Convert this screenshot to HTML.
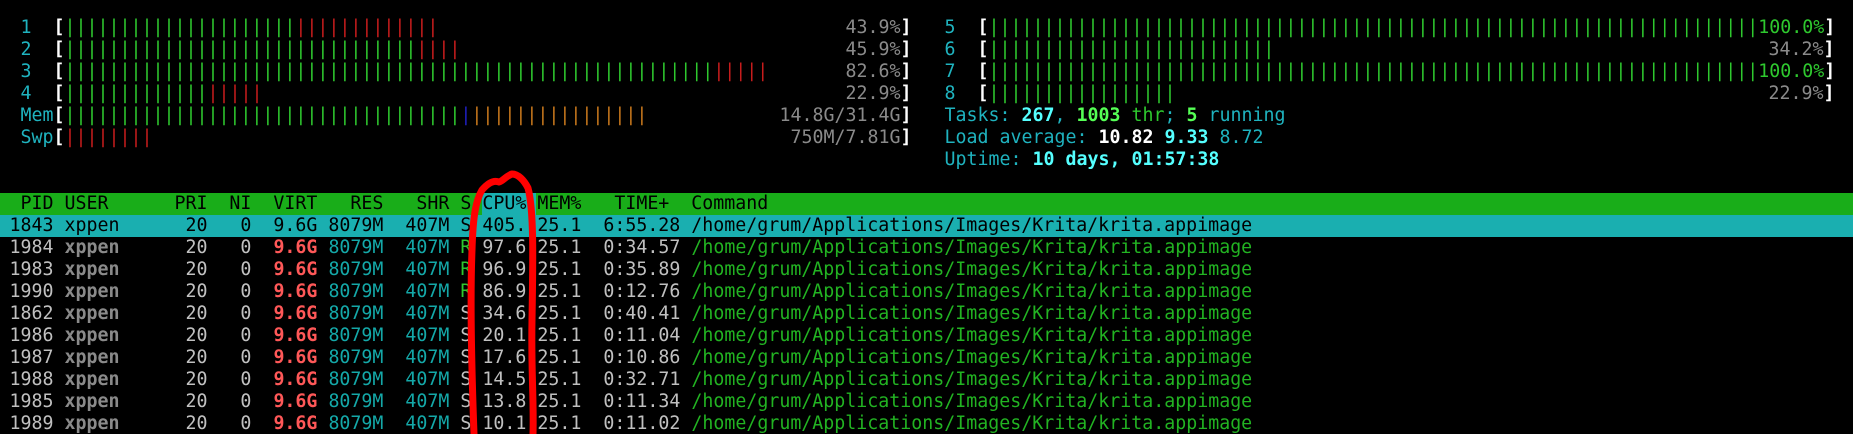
<!DOCTYPE html>
<html><head><meta charset="utf-8"><style>
html,body{margin:0;padding:0;background:#000;width:1853px;height:434px;overflow:hidden;position:relative}
*{font-family:"DejaVu Sans Mono","Liberation Mono",monospace;font-size:18.27px;}
.l{position:absolute;height:22px;line-height:22px;white-space:pre;color:#c0c0c0}
.c{color:#1fb3bf}.w{color:#fff;font-weight:bold}.g{color:#2ec82e}.r{color:#c61c1c}.o{color:#c8781c}.b{color:#2020c0}.p{color:#8a8a8a}
.bc{color:#55ffff;font-weight:bold}.bg{color:#55ff55;font-weight:bold}
.row{position:absolute;left:0;width:1853px;height:22px;line-height:22px;white-space:pre;color:#c0c0c0}
.row span.u{color:#8a8a8a;font-weight:bold}.row .v{color:#ff5858;font-weight:bold}.row .t{color:#14a8a8}.row .cm{color:#22b322}.row .sr{color:#2ec82e}
</style></head><body>
<!-- left meters -->
<div class="l" style="top:17px;left:-1.5px"><span class="c">  1  </span><span class="w">[</span><span class="g">|||||||||||||||||||||</span><span class="r">|||||||||||||</span></div>
<div class="l p" style="top:17px;left:306.5px;width:605px;text-align:right">43.9%<span class="w">]</span></div>
<div class="l" style="top:39px;left:-1.5px"><span class="c">  2  </span><span class="w">[</span><span class="g">||||||||||||||||||||||||||||||||</span><span class="r">||||</span></div>
<div class="l p" style="top:39px;left:306.5px;width:605px;text-align:right">45.9%<span class="w">]</span></div>
<div class="l" style="top:61px;left:-1.5px"><span class="c">  3  </span><span class="w">[</span><span class="g">|||||||||||||||||||||||||||||||||||||||||||||||||||||||||||</span><span class="r">|||||</span></div>
<div class="l p" style="top:61px;left:306.5px;width:605px;text-align:right">82.6%<span class="w">]</span></div>
<div class="l" style="top:83px;left:-1.5px"><span class="c">  4  </span><span class="w">[</span><span class="g">|||||||||||||</span><span class="r">|||||</span></div>
<div class="l p" style="top:83px;left:306.5px;width:605px;text-align:right">22.9%<span class="w">]</span></div>
<div class="l" style="top:105px;left:-1.5px"><span class="c">  Mem</span><span class="w">[</span><span class="g">||||||||||||||||||||||||||||||||||||</span><span class="b">|</span><span class="o">||||||||||||||||</span></div>
<div class="l p" style="top:105px;left:306.5px;width:605px;text-align:right">14.8G/31.4G<span class="w">]</span></div>
<div class="l" style="top:127px;left:-1.5px"><span class="c">  Swp</span><span class="w">[</span><span class="r">||||||||</span></div>
<div class="l p" style="top:127px;left:306.5px;width:605px;text-align:right">750M/7.81G<span class="w">]</span></div>
<!-- right meters -->
<div class="l" style="top:17px;left:944.5px"><span class="c">5  </span><span class="w">[</span><span class="g">||||||||||||||||||||||||||||||||||||||||||||||||||||||||||||||||||||||100.0%</span><span class="w">]</span></div>
<div class="l" style="top:39px;left:944.5px"><span class="c">6  </span><span class="w">[</span><span class="g">||||||||||||||||||||||||||</span></div>
<div class="l p" style="top:39px;left:1240.5px;width:594px;text-align:right">34.2%<span class="w">]</span></div>
<div class="l" style="top:61px;left:944.5px"><span class="c">7  </span><span class="w">[</span><span class="g">||||||||||||||||||||||||||||||||||||||||||||||||||||||||||||||||||||||100.0%</span><span class="w">]</span></div>
<div class="l" style="top:83px;left:944.5px"><span class="c">8  </span><span class="w">[</span><span class="g">|||||||||||||||||</span></div>
<div class="l p" style="top:83px;left:1240.5px;width:594px;text-align:right">22.9%<span class="w">]</span></div>
<div class="l c" style="top:105px;left:944.5px">Tasks: <span class="bc">267</span>, <span class="bg">1003</span> <span class="g">thr</span>; <span class="bg">5</span> running</div>
<div class="l c" style="top:127px;left:944.5px">Load average: <span class="w">10.82</span> <span class="bc">9.33</span> 8.72</div>
<div class="l c" style="top:149px;left:944.5px">Uptime: <span class="bc">10 days, 01:57:38</span></div>
<!-- table -->
<div class="row" style="top:193px;background:#19ad19;color:#000"><span style="position:absolute;left:482px;top:0;width:54px;height:22px;background:#1aafb0"></span><span style="position:absolute;left:-1.5px">  PID USER      PRI  NI  VIRT   RES   SHR S CPU% MEM%   TIME+  Command</span></div>
<div class="row" style="top:215px;background:#1aafb0;color:#000"><span style="position:absolute;left:-1.5px"> 1843 xppen      20   0  9.6G 8079M  407M S 405. 25.1  6:55.28 /home/grum/Applications/Images/Krita/krita.appimage</span></div>
<div class="row" style="top:237px"><span style="position:absolute;left:-1.5px"> 1984 <span class="u">xppen</span>      20   0  <span class="v">9.6G</span> <span class="t">8079M  407M</span> <span class="sr">R</span> 97.6 25.1  0:34.57 <span class="cm">/home/grum/Applications/Images/Krita/krita.appimage</span></span></div>
<div class="row" style="top:259px"><span style="position:absolute;left:-1.5px"> 1983 <span class="u">xppen</span>      20   0  <span class="v">9.6G</span> <span class="t">8079M  407M</span> <span class="sr">R</span> 96.9 25.1  0:35.89 <span class="cm">/home/grum/Applications/Images/Krita/krita.appimage</span></span></div>
<div class="row" style="top:281px"><span style="position:absolute;left:-1.5px"> 1990 <span class="u">xppen</span>      20   0  <span class="v">9.6G</span> <span class="t">8079M  407M</span> <span class="sr">R</span> 86.9 25.1  0:12.76 <span class="cm">/home/grum/Applications/Images/Krita/krita.appimage</span></span></div>
<div class="row" style="top:303px"><span style="position:absolute;left:-1.5px"> 1862 <span class="u">xppen</span>      20   0  <span class="v">9.6G</span> <span class="t">8079M  407M</span> S 34.6 25.1  0:40.41 <span class="cm">/home/grum/Applications/Images/Krita/krita.appimage</span></span></div>
<div class="row" style="top:325px"><span style="position:absolute;left:-1.5px"> 1986 <span class="u">xppen</span>      20   0  <span class="v">9.6G</span> <span class="t">8079M  407M</span> S 20.1 25.1  0:11.04 <span class="cm">/home/grum/Applications/Images/Krita/krita.appimage</span></span></div>
<div class="row" style="top:347px"><span style="position:absolute;left:-1.5px"> 1987 <span class="u">xppen</span>      20   0  <span class="v">9.6G</span> <span class="t">8079M  407M</span> S 17.6 25.1  0:10.86 <span class="cm">/home/grum/Applications/Images/Krita/krita.appimage</span></span></div>
<div class="row" style="top:369px"><span style="position:absolute;left:-1.5px"> 1988 <span class="u">xppen</span>      20   0  <span class="v">9.6G</span> <span class="t">8079M  407M</span> S 14.5 25.1  0:32.71 <span class="cm">/home/grum/Applications/Images/Krita/krita.appimage</span></span></div>
<div class="row" style="top:391px"><span style="position:absolute;left:-1.5px"> 1985 <span class="u">xppen</span>      20   0  <span class="v">9.6G</span> <span class="t">8079M  407M</span> S 13.8 25.1  0:11.34 <span class="cm">/home/grum/Applications/Images/Krita/krita.appimage</span></span></div>
<div class="row" style="top:413px"><span style="position:absolute;left:-1.5px"> 1989 <span class="u">xppen</span>      20   0  <span class="v">9.6G</span> <span class="t">8079M  407M</span> S 10.1 25.1  0:11.02 <span class="cm">/home/grum/Applications/Images/Krita/krita.appimage</span></span></div>
<svg style="position:absolute;left:0;top:0" width="1853" height="434"><path d="M474 434 C472 380 470 300 472 250 C473 215 476 200 482 190 C488 183 494 180 499 182 C503 181 506 176 512 174 C518 174 524 180 528 188 C534 210 533 260 532 320 C531 370 534 400 533 434" fill="none" stroke="#ff0000" stroke-width="7" stroke-linecap="round" stroke-linejoin="round"/></svg>
</body></html>
